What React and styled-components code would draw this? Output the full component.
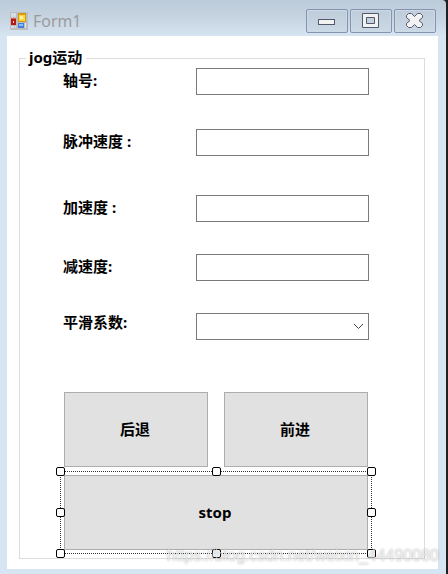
import React from 'react';
import styled, { createGlobalStyle, css } from 'styled-components';

const GlobalStyle = createGlobalStyle`
  * {
    box-sizing: border-box;
  }

  body {
    margin: 0;
    background: #1f2022;
  }
`;

// 窗体
const Window = styled.div`
  display: flex;
  flex-direction: column;
  min-height: 100vh;
  margin-right: 2px;
  padding: 0 8px 5px 7px;
  border-top-right-radius: 4px;
  background: linear-gradient(180deg, #bccbd9 0, #c8d5e2 20px, #d7e4f2 36px);
  color: #000;
  font-family: 'Noto Sans', 'Noto Sans CJK SC', sans-serif;
  font-size: 15px;
`;

// 标题栏
const TitleBar = styled.header`
  display: flex;
  align-items: flex-start;
  height: 36px;
  padding: 9px 2px 0 3px;
`;

const AppIcon = styled.svg`
  flex-shrink: 0;
  width: 18px;
  height: 18px;
  margin-top: 3px;
`;

const Title = styled.h1`
  flex: 1;
  margin: 0 0 0 5px;
  color: #999;
  font-family: 'Open Sans', sans-serif;
  font-size: 16px;
  font-weight: 400;
  line-height: 24px;
`;

const WindowButtons = styled.div`
  display: flex;
  gap: 2px;
`;

const WindowButton = styled.button`
  display: flex;
  align-items: center;
  justify-content: center;
  width: 42px;
  height: 24px;
  padding: 0;
  border: 1px solid #8494b0;
  border-radius: 2px;
  background: linear-gradient(180deg, #bfcddb, #cbd9e6);
  box-shadow: inset 0 0 0 1px #ccd9e6;
`;

const Glyph = styled.svg`
  width: 18px;
  height: 16px;
  fill: #f2f2f2;
  stroke: #53586b;
`;

// 客户区
const Client = styled.main`
  position: relative;
  flex: 1;
  padding: 12px 13px 10px 12px;
  background: #fff;
`;

const GroupBox = styled.fieldset`
  min-width: 0;
  margin: 0;
  padding: 0 55px 8px 43px;
  border: 1px solid #dcdcdc;
`;

const Legend = styled.legend`
  height: 20px;
  margin-left: -37px;
  padding: 0 4px 2px 3px;
  font-weight: 700;
  line-height: 18px;
`;

const Field = styled.div`
  display: grid;
  grid-template-columns: 133fr 173fr;
  align-items: ${({ $align }) => $align || 'center'};
  margin-bottom: ${({ $gap }) => $gap}px;
`;

const Label = styled.label`
  padding-bottom: 3px;
  font-weight: 700;
  line-height: 18px;
  white-space: nowrap;
`;

const box = css`
  width: 100%;
  height: 27px;
  padding: 0 4px;
  border: 1px solid #7a7a7a;
  border-radius: 0;
  background: #fff;
  font: inherit;
  outline: none;
`;

const TextBox = styled.input`
  ${box}
`;

const ComboWrap = styled.div`
  display: grid;
  align-items: center;

  > * {
    grid-area: 1 / 1;
  }

  svg {
    justify-self: end;
    margin-right: 5px;
    pointer-events: none;
  }
`;

const ComboBox = styled.select`
  ${box}
  appearance: none;
`;

// 按钮区
const Buttons = styled.div`
  display: grid;
  grid-template-columns: 1fr 1fr;
  gap: 8px 16px;
  margin: 0 1px;
`;

const Button = styled.button`
  width: 100%;
  height: 75px;
  padding: 0 2px 2px 0;
  border: 1px solid #adadad;
  border-radius: 0;
  background: #e1e1e1;
  color: #000;
  font: inherit;
  font-weight: 700;
`;

const Selected = styled.div`
  position: relative;
  grid-column: 1 / -1;
`;

// 选中控件的虚线框
const SelectionFrame = styled.div`
  position: absolute;
  inset: -4px;
  border: 1px dotted #333;
  pointer-events: none;
`;

const HandleLayer = styled.div`
  position: absolute;
  inset: 0 -1px -1px 0;
`;

const Handle = styled.span`
  position: absolute;
  left: ${({ $x }) => $x}%;
  top: ${({ $y }) => $y}%;
  width: 9px;
  height: 9px;
  margin: -5px;
  border: 1px solid #000;
  border-radius: 2px;
  background: #fff;
`;

const Watermark = styled.div`
  position: absolute;
  right: -1px;
  bottom: 3px;
  color: rgba(255, 255, 255, 0.6);
  font-family: 'Liberation Sans', sans-serif;
  font-size: 16px;
  line-height: 20px;
  text-shadow: 0 0 2px rgba(0, 0, 0, 0.3);
  white-space: nowrap;
  pointer-events: none;
`;

const handles = [
  [0, 0], [50, 0], [100, 0],
  [0, 50], [100, 50],
  [0, 100], [50, 100], [100, 100],
];

const fields = [
  { id: 'axis', label: '轴号:', gap: 34 },
  { id: 'pulse', label: '脉冲速度 :', gap: 39 },
  { id: 'acc', label: '加速度 :', gap: 32 },
  { id: 'dec', label: '减速度:', gap: 32 },
];

function FormIcon() {
  return (
    <AppIcon viewBox="0 0 18 18" shapeRendering="crispEdges" aria-hidden="true">
      <rect width="18" height="18" fill="#bdbdc0" />
      <rect x="1" y="1" width="5" height="4" fill="#d2dde8" />
      <rect x="1" y="14" width="3" height="2" fill="#d5dce5" />
      <rect x="5" y="14" width="1" height="2" fill="#d5dce5" />
      <rect x="15" y="11" width="1" height="5" fill="#e3e8ef" />
      <rect x="1" y="6" width="5" height="7" fill="#b51a12" />
      <rect x="1" y="6" width="5" height="1" fill="#dc6a58" />
      <rect x="3" y="9" width="1" height="2" fill="#ffd8cc" />
      <rect x="8" y="1" width="8" height="9" fill="#d49a10" />
      <rect x="9" y="3" width="6" height="6" fill="#ffd84a" />
      <rect x="10" y="4" width="3" height="3" fill="#fff0a0" />
      <rect x="8" y="11" width="6" height="5" fill="#3f7fe0" />
      <rect x="9" y="12" width="4" height="2" fill="#8cbcff" />
    </AppIcon>
  );
}

function App() {
  return (
    <>
      <GlobalStyle />
      <Window>
        <TitleBar>
          <FormIcon />
          <Title>Form1</Title>
          <WindowButtons>
            <WindowButton type="button" aria-label="最小化">
              <Glyph viewBox="0 0 18 16">
                <rect x="0.5" y="6.5" width="16" height="5" />
              </Glyph>
            </WindowButton>
            <WindowButton type="button" aria-label="最大化">
              <Glyph viewBox="0 0 18 16">
                <path d="M0.5 0.5h16v14h-16zM4.5 4.5v6h8v-6z" fillRule="evenodd" />
              </Glyph>
            </WindowButton>
            <WindowButton type="button" aria-label="关闭">
              <Glyph viewBox="0 0 18 16">
                <path
                  d="M2.500 0.500h3l3 3l3-3h3l2 2v2l-3.500 3l3.500 3v2l-2 2h-3l-3-3l-3 3h-3l-2-2v-2l3.500-3l-3.500-3v-2z"
                  strokeLinejoin="round"
                />
              </Glyph>
            </WindowButton>
          </WindowButtons>
        </TitleBar>

        <Client>
          <GroupBox>
            <Legend>jog运动</Legend>

            {fields.map(({ id, label, gap }) => (
              <Field key={id} $gap={gap}>
                <Label htmlFor={id}>{label}</Label>
                <TextBox id={id} type="text" />
              </Field>
            ))}
            <Field $gap={52} $align="start">
              <Label htmlFor="smooth">平滑系数:</Label>
              <ComboWrap>
                <ComboBox id="smooth" />
                <svg width="11" height="7" viewBox="0 0 11 7" fill="none" stroke="#444">
                  <path d="M1 1l4.500 4.500L10 1" />
                </svg>
              </ComboWrap>
            </Field>

            <Buttons>
              <Button type="button">后退</Button>
              <Button type="button">前进</Button>
              <Selected>
                <Button type="button">stop</Button>
                <SelectionFrame>
                  <HandleLayer>
                    {handles.map(([x, y]) => (
                      <Handle key={`${x}-${y}`} $x={x} $y={y} />
                    ))}
                  </HandleLayer>
                </SelectionFrame>
              </Selected>
            </Buttons>
          </GroupBox>
          <Watermark>https://blog.csdn.net/weixin_44490080</Watermark>
        </Client>
      </Window>
    </>
  );
}

export default App;
